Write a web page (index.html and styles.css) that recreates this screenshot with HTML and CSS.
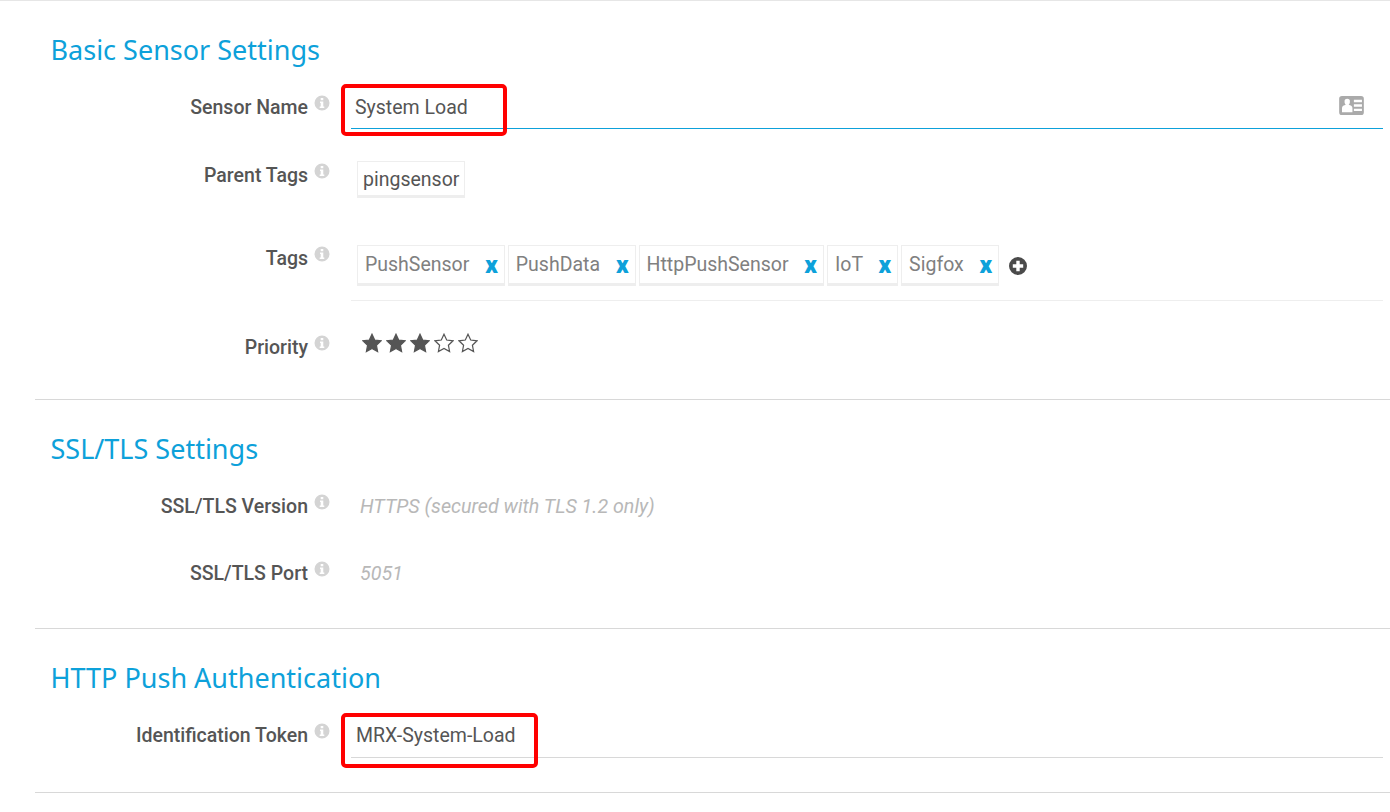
FILE: index.html
```html
<!DOCTYPE html>
<html lang="en">
  <head>
    <meta charset="UTF-8">
    <meta name="viewport" content="width=device-width, initial-scale=1.0">
    <link rel="stylesheet" href="styles.css">
    <title>Sensor Settings</title>
  </head>
  <body>
    <svg class="sprites" width="0" height="0">
      <symbol id="info" viewBox="0 0 16 16">
        <path fill="#d4d4d4" fill-rule="evenodd" d="M8 .5a7.5 7.5 0 1 0 0 15 7.500 7.500 0 0 0 0-15zM6.700 3h2.600v2.200H6.700zM6 6.500h3.300v5H10.300V13H5.700v-1.500h1V8H6z"/>
      </symbol>
      <symbol id="star" viewBox="0 0 20 20">
        <path d="M10 1.200l2.700 5.800 6.300.8-4.600 4.400 1.200 6.300-5.600-3.100-5.600 3.100 1.200-6.300L1 7.800l6.300-.8z"/>
      </symbol>
    </svg>

    <section class="group">
      <h2>Basic Sensor Settings</h2>
      <div class="row row-name">
        <label>Sensor Name <svg class="info"><use href="#info"/></svg></label>
        <div class="field field-active">
          <span class="value">System Load</span>
          <svg class="card-icon" viewBox="0 0 26 20">
            <path fill="#aaa" fill-rule="evenodd" d="M3 0h20a3 3 0 0 1 3 3v14a3 3 0 0 1-3 3H3a3 3 0 0 1-3-3V3a3 3 0 0 1 3-3zm5.500 3a2.800 2.800 0 0 0-2.800 3c0 1.300.5 2.400 1.300 3.200-2 .5-4 1.300-4 3.300V17h11v-4.500c0-2-2-2.800-4-3.300.8-.8 1.300-1.900 1.300-3.200a2.800 2.800 0 0 0-2.800-3zM15.500 4v2.500H24V4zm0 4.700v2.500H24V8.700zm0 4.700v2.500H24v-2.500z"/>
          </svg>
        </div>
      </div>
      <div class="row row-parent">
        <label>Parent Tags <svg class="info"><use href="#info"/></svg></label>
        <div class="field">
          <span class="tag tag-parent">pingsensor</span>
        </div>
      </div>
      <div class="row row-tags">
        <label>Tags <svg class="info"><use href="#info"/></svg></label>
        <div class="field field-tags">
          <span class="tag">PushSensor <b>x</b></span>
          <span class="tag">PushData <b>x</b></span>
          <span class="tag">HttpPushSensor <b>x</b></span>
          <span class="tag">IoT <b>x</b></span>
          <span class="tag">Sigfox <b>x</b></span>
          <svg class="add" viewBox="0 0 18 18">
            <path fill="#4a4a4a" fill-rule="evenodd" d="M9 0a9 9 0 1 0 0 18A9 9 0 0 0 9 0zM7.300 3.800h3.400v3.500h3.500v3.400h-3.500v3.500H7.300v-3.500H3.800V7.300h3.500z"/>
          </svg>
        </div>
      </div>
      <div class="row row-priority">
        <label>Priority <svg class="info"><use href="#info"/></svg></label>
        <div class="field stars">
          <svg class="star on"><use href="#star"/></svg>
          <svg class="star on"><use href="#star"/></svg>
          <svg class="star on"><use href="#star"/></svg>
          <svg class="star"><use href="#star"/></svg>
          <svg class="star"><use href="#star"/></svg>
        </div>
      </div>
    </section>

    <section class="group group-ssl">
      <h2>SSL/TLS Settings</h2>
      <div class="row row-ssl">
        <label>SSL/TLS Version <svg class="info"><use href="#info"/></svg></label>
        <div class="field readonly">HTTPS (secured with TLS 1.2 only)</div>
      </div>
      <div class="row row-ssl">
        <label>SSL/TLS Port <svg class="info"><use href="#info"/></svg></label>
        <div class="field readonly">5051</div>
      </div>
    </section>

    <section class="group group-auth">
      <h2>HTTP Push Authentication</h2>
      <div class="row row-token">
        <label>Identification Token <svg class="info"><use href="#info"/></svg></label>
        <div class="field field-token">
          <span class="value">MRX-System-Load</span>
        </div>
      </div>
    </section>

    <div class="callout callout-name"></div>
    <div class="callout callout-token"></div>
  </body>
</html>
```

FILE: styles.css
```css
body {
  margin: 0;
  height: 812px;
  overflow: hidden;
  border-top: 1px solid #e6e6e6;
  box-sizing: border-box;
  background-color: #fff;
  font-family: Roboto, sans-serif;
  font-size: 19.5px;
  color: #555;
  position: relative;
}

.sprites {
  position: absolute;
}

.group {
  margin-left: 35px;
  border-bottom: 1px solid #d8d8d8;
  box-sizing: border-box;
  height: 399px;
}

.group-ssl {
  height: 229px;
}

.group-auth {
  height: 164px;
}

h2 {
  margin: 0;
  padding: 31px 0 0 15.5px;
  height: 66px;
  box-sizing: border-box;
  font-family: "Noto Sans", sans-serif;
  font-size: 27px;
  line-height: 36px;
  font-weight: 400;
  color: #0da1da;
}

.row {
  display: flex;
}

label {
  width: 295px;
  flex: none;
  display: flex;
  justify-content: flex-end;
  align-items: flex-start;
  gap: 6px;
  font-weight: 500;
  line-height: 26px;
  color: #555;
  white-space: nowrap;
}

.info {
  width: 16px;
  height: 16px;
}

.field {
  margin-left: 21px;
  flex: 1;
  min-width: 0;
}

.row-name {
  height: 62px;
}

.row-name label {
  padding-top: 28px;
}

.field-active {
  height: 62px;
  box-sizing: border-box;
  margin-right: 7px;
  padding: 28px 0 0 4px;
  border-bottom: 1px solid #0da1da;
  display: flex;
  justify-content: space-between;
  line-height: 26px;
}

.card-icon {
  width: 25px;
  height: 19px;
  margin: 1px 19px 0 0;
}

.row-parent {
  height: 83px;
}

.row-parent label {
  padding-top: 34px;
}

.row-parent .field {
  padding-top: 32px;
  margin-left: 27px;
}

.tag {
  display: inline-block;
  height: 41px;
  box-sizing: border-box;
  padding: 5px 6px 0 7px;
  border: 1px solid #eee;
  border-bottom: 3px solid #eee;
  line-height: 28px;
  color: #808080;
  white-space: nowrap;
}

.tag-parent {
  height: 37px;
  padding: 4px 5px 0 5px;
  color: #555;
}

.tag b {
  margin-left: 11px;
  color: #0da1da;
  font-size: 24.5px;
  font-weight: 900;
  line-height: 20px;
  vertical-align: -2px;
}

.row-tags {
  height: 89px;
}

.row-tags label {
  padding-top: 34px;
}

.field-tags {
  height: 89px;
  box-sizing: border-box;
  margin-left: 21px;
  margin-right: 7px;
  padding: 33px 0 0 6px;
  border-bottom: 1px solid #eee;
  display: flex;
  gap: 3px;
  align-items: flex-start;
}

.add {
  width: 18px;
  height: 18px;
  margin: 12px 0 0 7px;
}

.row-priority {
  padding-top: 31px;
}

.row-priority label {
  padding-top: 3px;
}

.stars {
  margin-left: 32px;
  display: flex;
  gap: 4px;
  padding-top: 1px;
}

.star {
  width: 20px;
  height: 20px;
  fill: #fff;
  stroke: #555;
  stroke-width: 1.200;
}

.star.on {
  fill: #555;
}

.row-ssl {
  height: 67px;
  padding-top: 28px;
  box-sizing: border-box;
}

.readonly {
  margin-left: 30px;
  font-size: 19.7px;
  font-style: italic;
  color: #b8b8b8;
  line-height: 26px;
}

.row-token label {
  padding-top: 28px;
}

.field-token {
  height: 63px;
  box-sizing: border-box;
  margin-left: 21px;
  margin-right: 7px;
  padding: 28px 0 0 5px;
  border-bottom: 1px solid #d8d8d8;
  line-height: 26px;
}

.callout {
  position: absolute;
  box-sizing: border-box;
  border: 4px solid #f00;
  border-radius: 5px;
  left: 341px;
}

.callout-name {
  top: 83px;
  width: 166px;
  height: 52px;
}

.callout-token {
  top: 712px;
  width: 197px;
  height: 55px;
}
```
